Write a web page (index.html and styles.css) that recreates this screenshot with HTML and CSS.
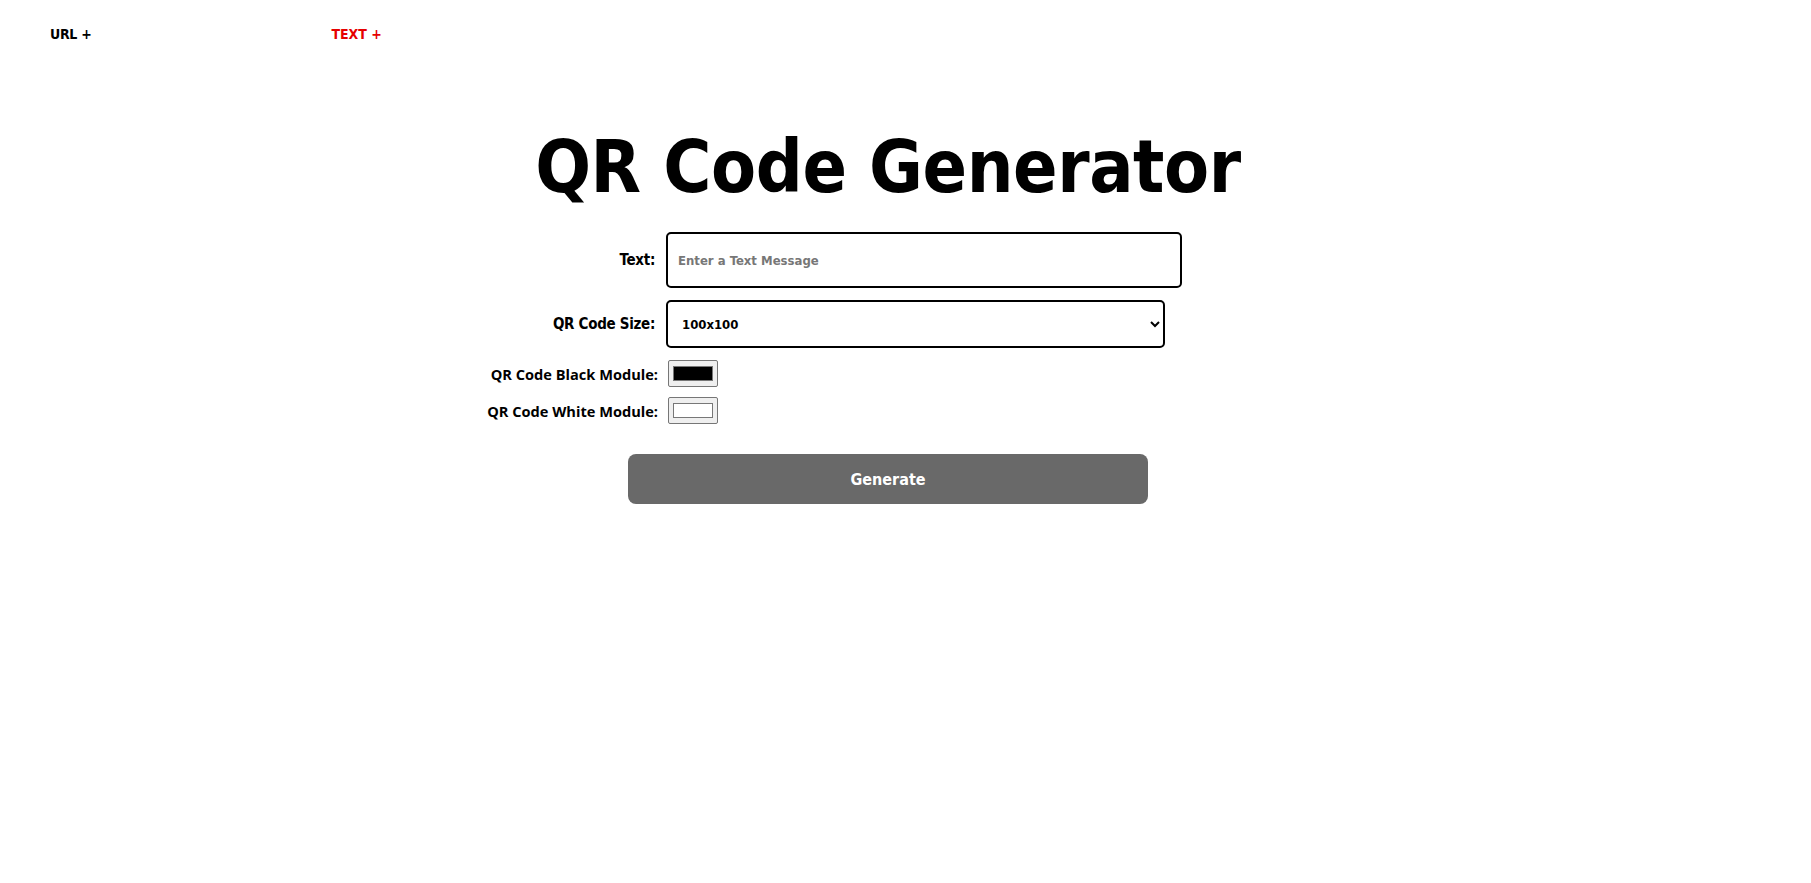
FILE: index.html
```html
<!DOCTYPE html>
<html lang="en">
<head>
<meta charset="utf-8">
<title>QR Code Generator</title>
<link rel="stylesheet" href="styles.css">
</head>
<body>
<nav class="nav">
  <a class="nav-link" href="#">URL +</a>
  <a class="nav-link nav-link-active" href="#">TEXT +</a>
</nav>
<main class="main">
  <h1 class="title">QR Code Generator</h1>
  <form class="form">
    <label class="label" for="text">Text:</label>
    <div class="field"><input class="text-input" id="text" type="text" placeholder="Enter a Text Message"></div>
    <label class="label" for="size">QR Code Size:</label>
    <div class="field">
      <select class="select" id="size">
        <option>100x100</option>
        <option>200x200</option>
        <option>300x300</option>
      </select>
    </div>
    <label class="label label-alt" for="dark">QR Code Black Module:</label>
    <div class="field"><input class="color" id="dark" type="color" value="#000000"></div>
    <label class="label label-alt label-tight" for="light">QR Code White Module:</label>
    <div class="field field-tight"><input class="color" id="light" type="color" value="#ffffff"></div>
  </form>
  <div class="actions">
    <button class="button" type="button">Generate</button>
  </div>
</main>
</body>
</html>
```
FILE: styles.css
```css
* { box-sizing: border-box; }
html, body { margin: 0; padding: 0; background: #fff; }
body {
  font-family: "DejaVu Sans Condensed", "DejaVu Sans", sans-serif;
  color: #000;
}
.nav {
  display: flex;
  gap: 240px;
  padding: 26px 0 0 50px;
  height: 60px;
}
.nav-link {
  font-family: "DejaVu Sans Condensed", sans-serif;
  font-weight: 700;
  font-size: 14px;
  letter-spacing: -0.3px;
  color: #000;
  text-decoration: none;
}
.nav-link-active { color: #e60000; letter-spacing: 0; }
.main {
  padding-right: 35px;
}
.title {
  margin: 62px 0 0;
  text-align: center;
  font-family: "DejaVu Sans Condensed", sans-serif;
  font-weight: 700;
  font-size: 73px;
  line-height: 90px;
  letter-spacing: -0.4px;
}
.form {
  display: grid;
  grid-template-columns: 655px 1fr;
  column-gap: 11px;
  row-gap: 12px;
  align-items: center;
  margin-top: 20px;
}
.label {
  text-align: right;
  font-weight: 700;
  font-size: 15px;
  letter-spacing: -0.3px;
}
.label-alt {
  font-family: "Open Sans", sans-serif;
  font-size: 14.6px;
  letter-spacing: 0;
  margin-right: -3px;
}
.label-tight, .field-tight { margin-top: -2px; }
.field { display: flex; }
.text-input {
  width: 516px;
  height: 56px;
  border: 2px solid #000;
  border-radius: 5px;
  padding: 0 10px;
  font-family: "DejaVu Sans Condensed", sans-serif;
  font-weight: 700;
  font-size: 13px;
  color: #000;
  outline: none;
}
.text-input::placeholder { color: #777; }
.select {
  width: 499px;
  height: 48px;
  border: 2px solid #000;
  border-radius: 5px;
  padding: 0 10px;
  font-family: "DejaVu Sans Condensed", sans-serif;
  font-weight: 700;
  font-size: 13px;
  color: #000;
  background: #fff;
}
.color {
  width: 50px;
  height: 27px;
  margin: 0 0 0 2px;
  padding: 1px 2px;
  border: 1px solid #767676;
  border-radius: 2px;
  background: #efefef;
}
.actions {
  display: flex;
  justify-content: center;
  margin-top: 30px;
}
.button {
  width: 520px;
  height: 50px;
  border: none;
  border-radius: 8px;
  background: #696969;
  color: #fff;
  font-family: "DejaVu Sans Condensed", sans-serif;
  font-weight: 700;
  font-size: 16px;
}
```
